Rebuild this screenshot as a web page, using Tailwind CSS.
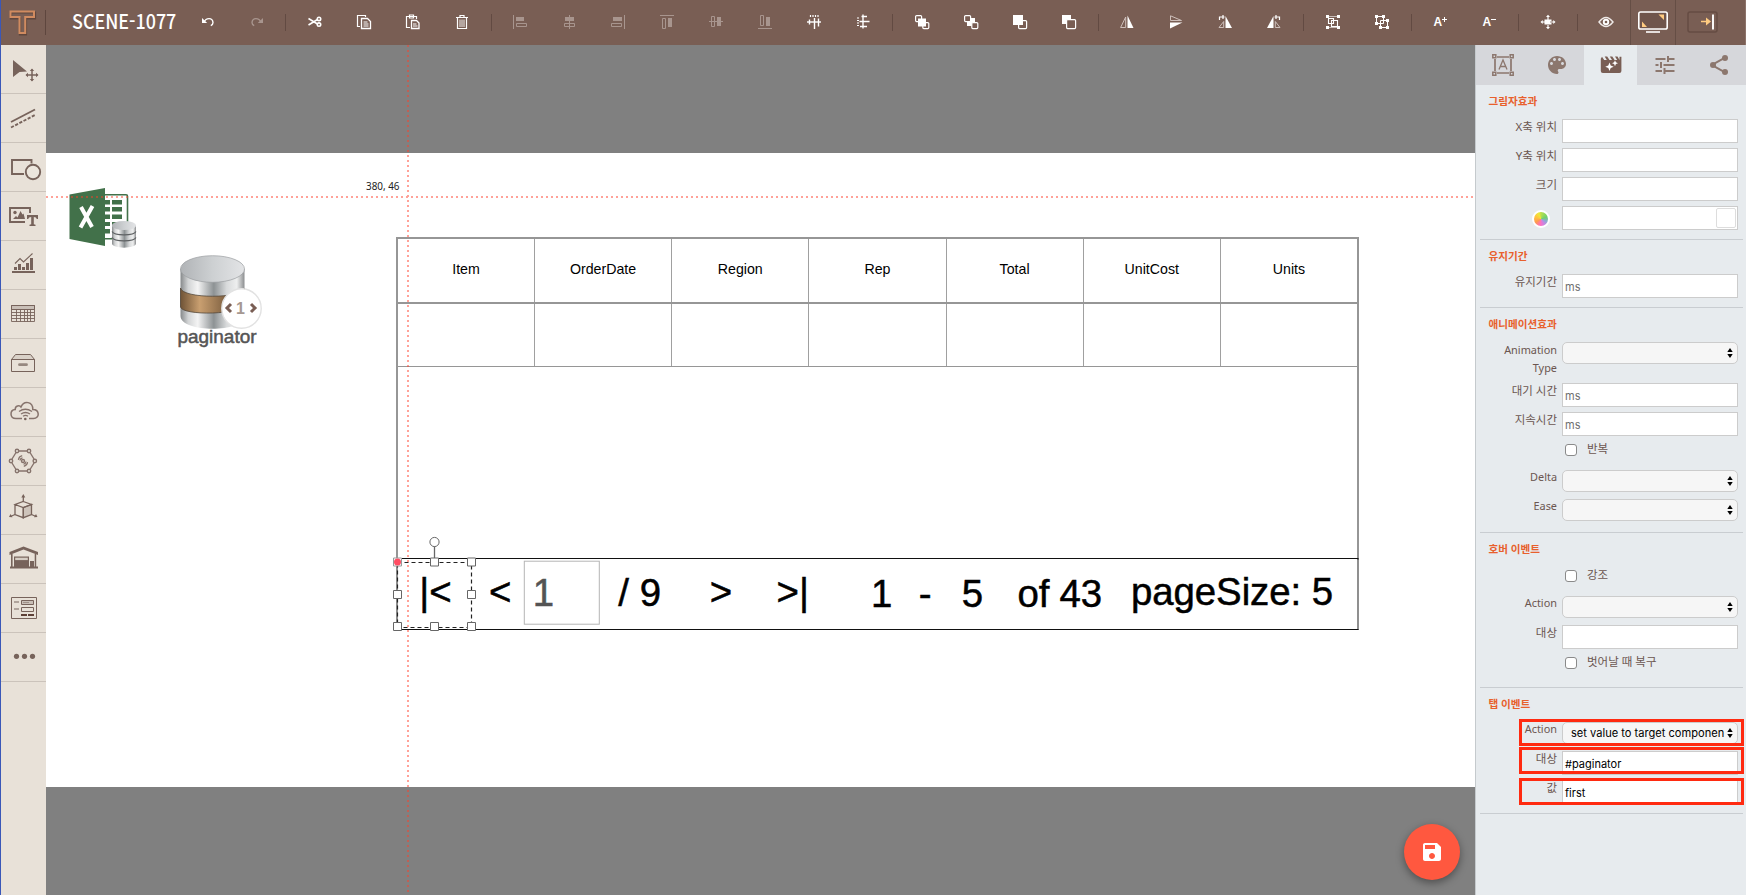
<!DOCTYPE html>
<html lang="ko">
<head>
<meta charset="utf-8">
<title>SCENE-1077</title>
<script src="https://cdn.jsdelivr.net/npm/@tailwindcss/browser@4"></script>
</head>
<body class="flex h-[895px] w-[1746px] flex-col overflow-hidden border-l border-[#3a57b8] bg-[#808080] font-['Noto_Sans','Noto_Sans_CJK_KR',sans-serif]">

<!-- toolbar -->
<header class="flex h-[45px] w-[1745px] shrink-0 items-stretch border-r border-[#8d736a] bg-[#795e54] text-white">
  <div class="flex w-[44px] items-center">
    <svg class="ml-[8px] h-[30px] w-[28px]" viewBox="0 0 28 30" fill="none"><path d="M2 4.500H26V10.500H17V26.500H11V10.500H2Z" stroke="#5f463d" stroke-width="2.200"/><path d="M1.500 3.500H25V9H16.200V25H10.500V9H1.500Z" stroke="#d08b60" stroke-width="2"/></svg>
  </div>
  <div class="my-[10px] w-px bg-[#5e463e]"></div>
  <div class="w-[135px] pl-[26px]"><div class="origin-left scale-x-[0.895] text-[20px] leading-[42px] whitespace-nowrap font-['Noto_Sans_CJK_KR',sans-serif] font-medium">SCENE-1077</div></div>

  <div class="flex items-center px-[2px] pr-[4px] pb-[2px]">
    <div class="flex w-[49px] justify-center"><svg class="size-4" viewBox="0 0 16 16" fill="none" stroke="#fff" stroke-width="1.400"><path d="M4 8.200C6 3.500 12.500 3.300 13 8.500c0 1.600-1 2.600-2.200 3.200"/><path d="M2 4v5h5.200z" fill="#fff" stroke="none"/></svg></div>
    <div class="flex w-[49px] justify-center"><svg class="size-4" viewBox="0 0 16 16" fill="none" stroke="#a8958e" stroke-width="1.400"><path d="M12 8.200C10 3.500 3.500 3.300 3 8.500c0 1.600 1 2.600 2.200 3.200"/><path d="M14 4v5H8.800z" fill="#a8958e" stroke="none"/></svg></div>
  </div>
  <div class="my-[14px] w-px bg-[#624a42]"></div>

  <div class="flex items-center px-[4.250px] pb-[2px]">
    <div class="flex w-[49px] justify-center"><svg class="size-4" viewBox="0 0 16 16" fill="none" stroke="#fff" stroke-width="1.600"><path d="M1.500 4.500l9 5.500M1.500 11l9-5.500"/><circle cx="12" cy="4.900" r="1.700"/><circle cx="12" cy="10.600" r="1.700"/></svg></div>
    <div class="flex w-[49px] justify-center"><svg class="size-4" viewBox="0 0 16 16" fill="none" stroke="#fff"><path d="M4 12.500H1.500V1.500h8V3" stroke-width="1.200"/><path d="M5.500 4.500h6l3 3v7h-9z" stroke-width="1.300"/><path d="M7.500 8h4M7.500 10h5M7.500 12h5"/></svg></div>
    <div class="flex w-[49px] justify-center"><svg class="size-4" viewBox="0 0 16 16" fill="none" stroke="#fff"><path d="M5 13.500H1.500v-11h10V5M4.500 1h4v3h-4z" stroke-width="1.200"/><path d="M6.500 6.500h5l2.500 2.500v5.500H6.500z" stroke-width="1.300"/><path d="M8 10h3.500M8 12h4.500"/></svg></div>
    <div class="flex w-[49px] justify-center"><svg class="size-4" viewBox="0 0 16 16" fill="none" stroke="#fff"><path d="M2 3.500h12M6 3V1.500h4V3M3.500 4v10.500h9V4" stroke-width="1.200"/><path d="M6 5.500v7.500M8 5.500v7.500M10 5.500v7.500" stroke-width=".9"/></svg></div>
  </div>
  <div class="my-[14px] w-px bg-[#624a42]"></div>

  <div class="flex items-center px-[4.250px] pb-[2px]">
    <div class="flex w-[49px] justify-center"><svg class="size-4" viewBox="0 0 16 16" fill="none" stroke="#a8958e"><path d="M1.500 1v14"/><path d="M4 3h8v4H4z" fill="#a8958e" stroke="none"/><path d="M4.500 9.500h10v3h-10z"/></svg></div>
    <div class="flex w-[49px] justify-center"><svg class="size-4" viewBox="0 0 16 16" fill="none" stroke="#a8958e"><path d="M8.500 1v14"/><path d="M4 3h9v4H4z" fill="#a8958e" stroke="none"/><path d="M3.500 9.500h10v3h-10z"/></svg></div>
    <div class="flex w-[49px] justify-center"><svg class="size-4" viewBox="0 0 16 16" fill="none" stroke="#a8958e"><path d="M14.500 1v14"/><path d="M3 3h9v4H3z" fill="#a8958e" stroke="none"/><path d="M1.500 9.500h10v3h-10z"/></svg></div>
    <div class="flex w-[49px] justify-center"><svg class="size-4" viewBox="0 0 16 16" fill="none" stroke="#a8958e"><path d="M1 1.500h14"/><path d="M9 4h4v9H9z" fill="#a8958e" stroke="none"/><path d="M3.500 4.500h3v10h-3z"/></svg></div>
    <div class="flex w-[49px] justify-center"><svg class="size-4" viewBox="0 0 16 16" fill="none" stroke="#a8958e"><path d="M1 7.500h14"/><path d="M9 3h4v9H9z" fill="#a8958e" stroke="none"/><path d="M3.500 2.500h3v10h-3z"/></svg></div>
    <div class="flex w-[49px] justify-center"><svg class="size-4" viewBox="0 0 16 16" fill="none" stroke="#a8958e"><path d="M1 14.500h14"/><path d="M9 3h4v9H9z" fill="#a8958e" stroke="none"/><path d="M3.500 1.500h3v10h-3z"/></svg></div>
    <div class="flex w-[49px] justify-center"><svg class="size-4" viewBox="0 0 16 16" fill="none" stroke="#fff"><path d="M1 8h14" stroke-width="1.400"/><path d="M4.500 1v2M7 1v2M9.500 1v2M12 1v2" stroke-width="1.200"/><path d="M3.500 5.500v5M8.500 4v11M12.500 4.500v8" stroke-width="1.400"/></svg></div>
    <div class="flex w-[49px] justify-center"><svg class="size-4" viewBox="0 0 16 16" fill="none" stroke="#fff"><path d="M8 .5v14" stroke-width="1.400"/><path d="M2 4h2M2 6.500h2M2 9h2M2 11.500h2" stroke-width="1.200"/><path d="M6.500 2.500H12M4.500 7.500h10M5 12.500h7" stroke-width="1.400"/></svg></div>
  </div>
  <div class="my-[14px] w-px bg-[#624a42]"></div>

  <div class="flex items-center px-[4.250px] pb-[2px]">
    <div class="flex w-[49px] justify-center"><svg class="size-4" viewBox="0 0 16 16" fill="none" stroke="#fff" stroke-width="1.200"><rect x="1.600" y="1.600" width="6" height="6" rx="1"/><rect x="8.800" y="8.600" width="6" height="6" rx="1"/><path d="M4 4.500h8v8H4z" fill="#fff" stroke="none"/></svg></div>
    <div class="flex w-[49px] justify-center"><svg class="size-4" viewBox="0 0 16 16" stroke="#fff" stroke-width="1.200"><path d="M4 4h8v8H4z" fill="#fff" stroke="none"/><rect x="1.600" y="1.600" width="6" height="6" rx="1" fill="#795e54"/><rect x="8.800" y="8.600" width="6" height="6" rx="1" fill="#795e54"/></svg></div>
    <div class="flex w-[49px] justify-center"><svg class="size-4" viewBox="0 0 16 16" fill="none" stroke="#fff" stroke-width="1.200"><rect x="6.600" y="6.600" width="8" height="8" rx="1"/><path d="M1 1h10v10H1z" fill="#fff" stroke="none"/></svg></div>
    <div class="flex w-[49px] justify-center"><svg class="size-4" viewBox="0 0 16 16" stroke="#fff" stroke-width="1.200"><path d="M1 1h9v9H1z" fill="#fff" stroke="none"/><rect x="5.600" y="5.600" width="9" height="9" rx="1" fill="#795e54"/></svg></div>
  </div>
  <div class="my-[14px] w-px bg-[#624a42]"></div>

  <div class="flex items-center px-[4.250px] pb-[2px]">
    <div class="flex w-[49px] justify-center"><svg class="size-4" viewBox="0 0 16 16" fill="none"><path d="M8.500 1.500L14.500 14H8.500z" fill="#fff"/><path d="M6.700 3v10.500H1.600z" stroke="#cdbfba"/></svg></div>
    <div class="flex w-[49px] justify-center"><svg class="size-4" viewBox="0 0 16 16" fill="none"><path d="M2 14.500L14.500 8.500H2z" fill="#fff"/><path d="M2.500 6.500h11L2.500 1.800z" stroke="#cdbfba"/></svg></div>
    <div class="flex w-[49px] justify-center"><svg class="size-4" viewBox="0 0 16 16" fill="none"><path d="M8.500 2L15 14H8.500z" fill="#fff"/><path d="M6.700 7.500v6H2z" stroke="#cdbfba"/><path d="M2.500 6V3h5M6 1v4" stroke="#fff" stroke-width="1.200"/></svg></div>
    <div class="flex w-[49px] justify-center"><svg class="size-4" viewBox="0 0 16 16" fill="none"><path d="M7.500 2L1 14h6.500z" fill="#fff"/><path d="M9.300 7.500v6H14z" stroke="#cdbfba"/><path d="M13.500 6V3h-5M10 1v4" stroke="#fff" stroke-width="1.200"/></svg></div>
  </div>
  <div class="my-[14px] w-px bg-[#624a42]"></div>

  <div class="flex items-center px-[4.250px] pb-[2px]">
    <div class="flex w-[49px] justify-center"><svg class="size-4" viewBox="0 0 16 16" fill="none" stroke="#fff"><path d="M4 2.500h8M4 13.500h8" stroke-width=".6"/><path d="M3.500 4.500h5v5h-5zM6.500 6.500h6v6h-6z" stroke-width="1.100"/><path d="M1 1h3v3H1zM12 1h3v3h-3zM1 12h3v3H1zM12 12h3v3h-3z" fill="#fff" stroke="none"/></svg></div>
    <div class="flex w-[49px] justify-center"><svg class="size-4" viewBox="0 0 16 16" fill="none" stroke="#fff"><path d="M2.500 2.500h7v7h-7zM6.500 6.500h7v7h-7z" stroke-width="1"/><path d="M1 1h3v3H1zM8 1h3v3H8zM1 8h3v3H1zM12 5h3v3h-3zM5 12h3v3H5zM12 12h3v3h-3z" fill="#fff" stroke="none"/></svg></div>
  </div>
  <div class="my-[14px] w-px bg-[#624a42]"></div>

  <div class="flex items-center px-[4.250px] pb-[2px]">
    <div class="flex w-[49px] items-start justify-center pt-px"><span class="font-['Liberation_Sans',sans-serif] text-[12px] leading-[14px] font-bold">A</span><svg class="mt-[2px] size-[5px]" viewBox="0 0 6 6" stroke="#fff"><path d="M0 3h6M3 0v6" stroke-width="1.200"/></svg></div>
    <div class="flex w-[49px] items-start justify-center pt-px"><span class="font-['Liberation_Sans',sans-serif] text-[12px] leading-[14px] font-bold">A</span><svg class="mt-[2px] size-[5px]" viewBox="0 0 6 6" stroke="#fff"><path d="M0 3h6" stroke-width="1.200"/></svg></div>
  </div>
  <div class="my-[14px] w-px bg-[#624a42]"></div>

  <div class="flex items-center px-[4.250px] pb-[2px]">
    <div class="flex w-[49px] justify-center"><svg class="size-4" viewBox="0 0 16 16" fill="#fff"><path d="M4.500 5.500h7v5h-7zM8 .8l2 2.200H8.600v3H7.400V3H6zM8 15.200l2-2.200H8.600v-3H7.400v3H6zM.5 8l2.200-2v1.400h3v1.200h-3V10zM15.500 8l-2.200-2v1.400h-3v1.200h3V10z"/></svg></div>
  </div>
  <div class="my-[14px] w-px bg-[#624a42]"></div>
  <div class="flex w-[52px] items-center justify-center pb-[2px] pl-[4px]"><svg class="size-4" viewBox="0 0 16 16" fill="none" stroke="#eee9e7"><path d="M1 8q7-9 14 0q-7 9-14 0z" stroke-width="1.400"/><circle cx="8" cy="8" r="3.200" fill="#fff" stroke="none"/><circle cx="8" cy="8" r="1.300" fill="#795e54" stroke="none"/></svg></div>
  <div class="flex w-[46px] items-center justify-center border-x border-[#654e45] pb-px"><svg class="h-[24px] w-[32px]" viewBox="0 0 32 24"><rect x="1.800" y="2" width="28.400" height="17" rx="1.800" fill="#6f554c" stroke="#fff" stroke-width="1.600"/><path d="M5 17v-5.500l5 5.500zM27 4.500v5.500l-5.500-5.500z" fill="#ffcb80"/><path d="M9 22h14" stroke="#fff" stroke-width="1.600"/></svg></div>
  <div class="flex flex-1 items-center pb-px pl-[11px]"><svg class="h-[22px] w-[32px]" viewBox="0 0 32 22"><rect x="1" y="1" width="29" height="20" rx="2" fill="none" stroke="#654c43" stroke-width="1.500"/><path d="M14 10.500h7" stroke="#ffcb80" stroke-width="1.500"/><path d="M19 6.500l5 4-5 4z" fill="#ffcb80"/><path d="M26 3.500v15" stroke="#fff" stroke-width="1.900"/></svg></div>
</header>

<div class="flex h-[850px] w-[1745px]">

  <!-- component palette -->
  <nav class="w-[45px] shrink-0 bg-[#e8e1d8]">
    <div class="h-[49px] border-b border-[#cbc3bb]"><svg class="h-[48px] w-[45px]" viewBox="0 0 45 48"><path d="M12 15l14 11.500-7.500.5L12 32z" fill="#77635b"/><path d="M25.500 30h11M31 24.500v11" stroke="#77635b" stroke-width="1.500"/><path d="M31 23.500l2.200 2.500h-4.400zM31 36.500l2.200-2.500h-4.400zM24.500 30l2.500-2.200v4.400zM37.500 30l-2.500-2.200v4.400z" fill="#77635b"/></svg></div>
    <div class="h-[49px] border-b border-[#cbc3bb]"><svg class="h-[48px] w-[45px]" viewBox="0 0 45 48" fill="none" stroke="#77635b" stroke-width="1.900"><path d="M10 28l24-12.500"/><path d="M10 33.500l24-12.500" stroke-dasharray="3.200 1.500"/></svg></div>
    <div class="h-[49px] border-b border-[#cbc3bb]"><svg class="h-[48px] w-[45px]" viewBox="0 0 45 48" fill="none" stroke="#77635b" stroke-width="1.900"><path d="M23 31H11V17h19.500v3.500"/><circle cx="32" cy="29" r="7.200" fill="#ece6dd"/></svg></div>
    <div class="h-[49px] border-b border-[#cbc3bb]"><svg class="h-[48px] w-[45px]" viewBox="0 0 45 48" fill="none"><path d="M24 30H9V16h20v5" stroke="#77635b" stroke-width="1.900"/><circle cx="14" cy="20.500" r="1.700" fill="#77635b"/><path d="M12 27l3-3 1.500 1.500L19.500 19l2 3.500 1-1 1.500 5.500z" fill="#77635b"/><path d="M26 23h11v4h-1.200q-.3-2-3-2v7.300l1.700.4V34h-6v-1.300l1.700-.4V25q-2.700 0-3 2H26z" fill="#77635b"/></svg></div>
    <div class="h-[49px] border-b border-[#cbc3bb]"><svg class="h-[48px] w-[45px]" viewBox="0 0 45 48" fill="#77635b"><path d="M11 30h23v2H11zM13 26h3v3h-3zM17 23h3v6h-3zM21 26h3v3h-3zM25 22h3v7h-3zM29 17h3v12h-3z"/><path d="M14 22.500l5-5 3.500 3.500 9-8.500" fill="none" stroke="#77635b" stroke-width="1.100"/></svg></div>
    <div class="h-[49px] border-b border-[#cbc3bb]"><svg class="h-[48px] w-[45px]" viewBox="0 0 45 48" fill="none" stroke="#77635b"><path d="M10.500 15.500h23v4h-23z" fill="#c9bfb7"/><path d="M10.500 15.500h23v16h-23zM10.500 22.500h23M10.500 25.500h23M10.500 28.500h23M15.500 19.500v12M19.500 19.500v12M23.500 19.500v12M26.500 19.500v12M29.500 19.500v12" stroke-width=".9"/></svg></div>
    <div class="h-[49px] border-b border-[#cbc3bb]"><svg class="h-[48px] w-[45px]" viewBox="0 0 45 48" fill="none" stroke="#77635b"><path d="M10.500 20.500l4-5h15l4 5z" fill="#d9d1c8"/><path d="M10.500 20.500h23v12h-23z"/><path d="M18.500 25.700h7" stroke="#968880" stroke-width="2.800" stroke-linecap="round"/></svg></div>
    <div class="h-[49px] border-b border-[#cbc3bb]"><svg class="h-[48px] w-[45px]" viewBox="0 0 45 48" fill="none" stroke="#86736c" stroke-width="1.500"><path d="M21 30.500h-6c-6.500 0-6.500-8.500-.8-9-.2-4 4.500-4.500 5.800-2.500 3-7 12-5.500 11.800 2.500 7 0 7.200 9 .7 9H28"/><path d="M18 23.500q6.300-4.500 13 0M20 26q4.400-3 9 0M22 28.200q2.500-1.600 5 0" stroke-width="1.300"/><circle cx="24.300" cy="31" r="1.300" fill="#77635b" stroke="none"/></svg></div>
    <div class="h-[49px] border-b border-[#cbc3bb]"><svg class="h-[48px] w-[45px]" viewBox="0 0 45 48" fill="none" stroke="#86736c" stroke-width="1.400"><path d="M18 14h8M18 34h8M11 22l4-6.500M11 26l4 6.500M33 22l-4-6.500M33 26l-4 6.500"/><g fill="#e8e1d8"><circle cx="16" cy="14" r="1.700"/><circle cx="28" cy="14" r="1.700"/><circle cx="10" cy="24" r="1.700"/><circle cx="33.800" cy="24" r="1.700"/><circle cx="16" cy="34" r="1.700"/><circle cx="28" cy="34" r="1.700"/></g><circle cx="22" cy="24" r="1.500"/><path d="M19 23.500a3 3 0 0 1 2.500-2.700M17.400 22.800a5 5 0 0 1 3.800-4.200M25 24.500a3 3 0 0 1-2.500 2.700M26.600 25.200a5 5 0 0 1-3.800 4.200" stroke-width="1.200"/></svg></div>
    <div class="h-[49px] border-b border-[#cbc3bb]"><svg class="h-[48px] w-[45px]" viewBox="0 0 45 48" fill="none" stroke="#77635b" stroke-width="1.300"><path d="M22.300 21.500l8.200-3v10l-8.200 3.200z" fill="#cdc3ba"/><path d="M22.300 15.500l8.200 3-8.200 3-8.200-3zM14 18.500v10l8.300 3.200V21.500"/><path d="M22.300 15.500V10M14 28.500l-4.500 2M30.500 28.500l4.500 2"/><path d="M22.300 8l2 3.500h-4zM8 31l1.500-3 2 3.200zM36.500 31l-1.500-3-2 3.200z" fill="#77635b" stroke="none"/></svg></div>
    <div class="h-[49px] border-b border-[#cbc3bb]"><svg class="h-[48px] w-[45px]" viewBox="0 0 45 48" fill="#77635b"><path d="M8.500 17l14-5.500L37 17v3l-14.500-5.500-14 5.500z"/><path d="M10 19h1.600v13H10zM33.700 19h1.500v13h-1.500zM9 31.500h28v2H9zM29 26h4v5.500h-4z"/><path d="M13 21.500h15V32H13z"/><path d="M14.200 22.700h12.600v2.400H14.200z" fill="#d6cdc4"/></svg></div>
    <div class="h-[49px] border-b border-[#cbc3bb]"><svg class="h-[48px] w-[45px]" viewBox="0 0 45 48" fill="none" stroke="#77635b"><path d="M10.500 13.500h25v21h-25z"/><path d="M20.500 16.500h12v4h-12z" fill="#c9bfb7"/><path d="M20.500 23.500h12v4h-12z"/><path d="M13 18h5M13 25h5" stroke="#b0a49c" stroke-width="1.800"/><path d="M22.500 18.500h5" stroke-width="1.200" stroke-dasharray="1 1"/><path d="M20 31h6M27 31h6" stroke="#5d4037" stroke-width="1.800"/></svg></div>
    <div class="h-[49px] border-b border-[#cbc3bb]"><svg class="h-[48px] w-[45px]" viewBox="0 0 45 48" fill="#77635b"><circle cx="15.500" cy="23.300" r="2.600"/><circle cx="23.500" cy="23.300" r="2.600"/><circle cx="31.500" cy="23.300" r="2.600"/></svg></div>
  </nav>

  <!-- stage: a free canvas, objects keep their own coordinates -->
  <main class="relative w-[1429px] shrink-0 overflow-hidden bg-[#808080]">
    <div class="absolute top-[108px] left-0 h-[634px] w-full bg-white"></div>

    <!-- data table component -->
    <div class="absolute top-[191.500px] left-[350px] flex h-[323px] w-[963px] flex-col border-2 border-b-0 border-[#969696] font-['Liberation_Sans',sans-serif] text-[14.200px] text-black">
      <div class="grid h-[65px] grid-cols-[136px_repeat(6,1fr)] border-b-2 border-[#969696] text-center leading-[61px]">
        <div>Item</div>
        <div class="border-l border-[#a0a0a0]">OrderDate</div>
        <div class="border-l border-[#a0a0a0]">Region</div>
        <div class="border-l border-[#a0a0a0]">Rep</div>
        <div class="border-l border-[#a0a0a0]">Total</div>
        <div class="border-l border-[#a0a0a0]">UnitCost</div>
        <div class="border-l border-[#a0a0a0]">Units</div>
      </div>
      <div class="grid h-[63px] grid-cols-[136px_repeat(6,1fr)] border-b border-[#969696]">
        <div></div>
        <div class="border-l border-[#a0a0a0]"></div>
        <div class="border-l border-[#a0a0a0]"></div>
        <div class="border-l border-[#a0a0a0]"></div>
        <div class="border-l border-[#a0a0a0]"></div>
        <div class="border-l border-[#a0a0a0]"></div>
        <div class="border-l border-[#a0a0a0]"></div>
      </div>
    </div>

    <svg class="absolute inset-0 h-[850px] w-[1429px]" viewBox="46 45 1429 850" fill="none">
      <defs>
        <linearGradient id="steel"><stop offset="0" stop-color="#86898b"/><stop offset=".12" stop-color="#d2d4d5"/><stop offset=".27" stop-color="#f4f4f4"/><stop offset=".52" stop-color="#8d9294"/><stop offset=".72" stop-color="#d8dadb"/><stop offset=".88" stop-color="#eeefef"/><stop offset="1" stop-color="#8b8d8f"/></linearGradient>
        <linearGradient id="lid"><stop offset="0" stop-color="#b0b3b6"/><stop offset=".5" stop-color="#cdd0d2"/><stop offset="1" stop-color="#e3e4e6"/></linearGradient>
        <linearGradient id="brass"><stop offset="0" stop-color="#6f5336"/><stop offset=".3" stop-color="#c99f70"/><stop offset=".65" stop-color="#8a6a48"/><stop offset="1" stop-color="#5a432b"/></linearGradient>
      </defs>

      <!-- spreadsheet source -->
      <rect x="100" y="194.700" width="27.500" height="44" rx="1.500" fill="#fff" stroke="#42714a" stroke-width="1.600"/>
      <path d="M104 200h6v4.500h-6zM112 200h10v4.500h-10zM104 207h6v4.500h-6zM112 207h10v4.500h-10zM104 214.500h6v4.500h-6zM112 214.500h10v4.500h-10zM104 222h6v4h-6zM112 222h10v4h-10zM104 229h6v4.500h-6z" fill="#42714a"/>
      <path d="M69.500 194.500L105 188v58l-35.500-7z" fill="#42714a"/>
      <path d="M81 207l11 20M92.500 206l-12 21.500" stroke="#fff" stroke-width="4"/>
      <path d="M112 225v18.500c0 5.500 24 5.500 24 0V225z" fill="url(#steel)"/>
      <path d="M112 231.500c2 4.500 22 4.500 24 0M112 237.500c2 4.500 22 4.500 24 0" stroke="#5e6163" stroke-width="1.100"/>
      <ellipse cx="124" cy="225.500" rx="12" ry="4.500" fill="url(#lid)"/>

      <!-- paginator source -->
      <path d="M180.500 269v47c0 17 64 17 64 0v-47z" fill="url(#steel)"/>
      <path d="M180.500 288c2 11 62 11 64 0v16c-2 11-62 12-64 3z" fill="url(#brass)" stroke="#54473a" stroke-width=".8"/>
      <ellipse cx="212.500" cy="269" rx="32" ry="13.300" fill="url(#lid)" stroke="#9b9ea0" stroke-width=".7"/>
      <circle cx="241.500" cy="308.500" r="19.700" fill="#fff" stroke="#e2e2e2" stroke-width="1.400"/>
      <path d="M231 304l-4 4 4 4M251 304l4 4-4 4" stroke="#795e54" stroke-width="3"/>
      <text x="236" y="314" font-family="Liberation Sans, sans-serif" font-weight="700" font-size="16" fill="#a69892">1</text>
      <text x="177.500" y="343" font-family="Liberation Sans, sans-serif" font-size="18" fill="#555" stroke="#555" stroke-width=".5" textLength="79" lengthAdjust="spacingAndGlyphs">paginator</text>

      <!-- pager bar -->
      <path d="M397 630V558.700M1358 558.700V630" stroke="#555" stroke-width="1.300"/>
      <path d="M397 558.500h961.500M397 629.500h961.500" stroke="#111" stroke-width="1"/>
      <rect x="524.300" y="561.200" width="75" height="63" fill="#fff" stroke="#b5b5b5"/>
      <g font-family="Liberation Sans, sans-serif" font-size="38.400" fill="#000" stroke="#000" stroke-width=".5">
        <text x="419.300" y="605">|&lt;</text>
        <text x="489" y="605">&lt;</text>
        <text x="532.700" y="605.500" fill="#545454" stroke="#545454">1</text>
        <text x="618.300" y="605.500">/ 9</text>
        <text x="709.800" y="605">&gt;</text>
        <text x="776.500" y="605">&gt;|</text>
        <text x="871" y="607">1</text>
        <text x="918.700" y="607">-</text>
        <text x="961.700" y="607">5</text>
        <text x="1017.500" y="607" textLength="84.500">of 43</text>
        <text x="1131" y="605" textLength="202">pageSize: 5</text>
      </g>

      <!-- guides -->
      <path d="M46 197h1429M408 45v850" stroke="#ff3c28" stroke-opacity=".48" stroke-width="2" stroke-dasharray="2 3"/>
      <text x="366" y="190" font-family="Noto Sans, sans-serif" font-size="11" fill="#222" textLength="33.500" lengthAdjust="spacingAndGlyphs">380, 46</text>

      <!-- selection -->
      <path d="M397.500 562.500h74v65h-74z" stroke="#222" stroke-width="1.200" stroke-dasharray="4 3"/>
      <path d="M434.500 546v12" stroke="#666" stroke-width="1.300"/>
      <g fill="#fff" stroke="#666" stroke-width="1">
        <circle cx="434.500" cy="542" r="4.600"/>
        <path d="M430.500 558h8v8h-8zM467.500 558h8v8h-8zM393.500 590.500h8v8h-8zM467.500 590.500h8v8h-8zM393.500 622.500h8v8h-8zM430.500 622.500h8v8h-8zM467.500 622.500h8v8h-8z"/>
        <path d="M393.500 558h8v8h-8z" stroke="#999"/>
      </g>
      <circle cx="397.500" cy="562" r="3.500" fill="#ff4c62"/>
    </svg>

    <button class="absolute top-[779px] left-[1358px] flex size-[56px] items-center justify-center rounded-full bg-[#ff583f] shadow-[0_3px_8px_rgba(0,0,0,0.4)]">
      <svg class="size-6" viewBox="0 0 24 24" fill="#fff"><path d="M17 3H5c-1.110 0-2 .9-2 2v14c0 1.100.89 2 2 2h14c1.100 0 2-.9 2-2V7l-4-4zm-5 16c-1.660 0-3-1.340-3-3s1.340-3 3-3 3 1.340 3 3-1.340 3-3 3zm3-10H5V5h10v4z"/></svg>
    </button>
  </main>

  <!-- property panel -->
  <aside class="relative flex w-[271px] flex-col overflow-hidden border-l border-[#c5cacd] bg-[#e7ebee]">
    <div class="flex h-[40px] shrink-0 bg-[#d6d7db]">
      <div class="flex w-[54px] items-center justify-center"><svg class="h-[22px] w-[22px]" viewBox="0 0 22 22" fill="none" stroke="#8c776e" stroke-width="1.500"><path d="M3 5v12M19 5v12M5 3h12M5 19h12" stroke-width="1.700"/><path d="M.8.8h3v3h-3zM18.200.8h3v3h-3zM.8 18.200h3v3h-3zM18.200 18.200h3v3h-3z"/><path d="M7 15.500l4-9.500 4 9.500M8.500 12.500h5" stroke-width="1.300"/></svg></div>
      <div class="flex w-[54px] items-center justify-center"><svg class="size-6" viewBox="0 0 24 24" fill="#8c776e"><path d="M12 3c-4.970 0-9 4.030-9 9s4.030 9 9 9c.83 0 1.500-.67 1.500-1.500 0-.39-.15-.74-.39-1.010-.23-.26-.38-.61-.38-.99 0-.83.67-1.500 1.500-1.500H16c2.760 0 5-2.240 5-5 0-4.420-4.030-8-9-8zm-5.500 9c-.83 0-1.500-.67-1.500-1.500S5.670 9 6.500 9 8 9.670 8 10.500 7.330 12 6.500 12zm3-4C8.670 8 8 7.330 8 6.500S8.670 5 9.500 5s1.500.67 1.500 1.500S10.330 8 9.500 8zm5 0c-.83 0-1.500-.67-1.500-1.500S13.670 5 14.500 5s1.500.67 1.500 1.500S15.330 8 14.500 8zm3 4c-.83 0-1.500-.67-1.500-1.500S16.670 9 17.500 9s1.500.67 1.500 1.500-.67 1.500-1.500 1.500z"/></svg></div>
      <div class="flex w-[53px] items-center justify-center bg-[#e7ebee]"><svg class="h-[18px] w-[22px]" viewBox="0 0 22 18"><path d="M2 .8L4.200 4h2.600L4.700.5h2.500L9.500 4H12L9.800.5h2.500L14.600 4h2.600L15 .5h2.500L19.500 4V.8h1.900V15q0 2-2 2H2.800q-2 0-2-2V2.800z" fill="#795e54"/><path d="M9.500 6.500l1.200 3 3 1.200-3 1.200-1.200 3-1.200-3-3-1.200 3-1.200zM15 4.200l.9 2.100 2.100.9-2.100.9-.9 2.100-.9-2.100-2.100-.9 2.100-.9z" fill="#fff"/></svg></div>
      <div class="flex w-[55px] items-center justify-center"><svg class="h-[20px] w-[20px]" viewBox="0 0 20 20" fill="#8c776e"><path d="M.5 3h10v2H.5zM12 1h2v6h-2zM14 3h5.500v2H14zM.5 9h3v2h-3zM5 7h2v6H5zM8.500 9h11v2h-11zM.5 15H7v2H.5zM8.500 13h2v6h-2zM10.500 15h9v2h-9z"/></svg></div>
      <div class="flex w-[54px] items-center justify-center"><svg class="size-6" viewBox="0 0 24 24" fill="#8c776e"><path d="M5.500 11.700L18 4.700M5.500 12.300L18 19.300" stroke="#8c776e" stroke-width="1.900"/><circle cx="18" cy="5" r="3"/><circle cx="6" cy="12" r="3"/><circle cx="18" cy="19" r="3"/></svg></div>
    </div>

    <section class="mx-[4px] mr-[3px] border-b border-[#c9cdd1] pb-[4px]">
      <h3 class="h-[34px] pl-[8.500px] text-[10.600px] leading-[32px] font-bold text-[#e8602c]">그림자효과</h3>
      <div class="flex h-[29px]"><label class="w-[77px] pt-px text-right text-[11.500px] leading-[13px] text-[#6b5650]">X축 위치</label><div class="ml-[5px] h-[24px] w-[176px] border border-[#ccc] bg-white"></div></div>
      <div class="flex h-[29px]"><label class="w-[77px] pt-px text-right text-[11.500px] leading-[13px] text-[#6b5650]">Y축 위치</label><div class="ml-[5px] h-[24px] w-[176px] border border-[#ccc] bg-white"></div></div>
      <div class="flex h-[29px]"><label class="w-[77px] pt-px text-right text-[11.500px] leading-[13px] text-[#6b5650]">크기</label><div class="ml-[5px] h-[24px] w-[176px] border border-[#ccc] bg-white"></div></div>
      <div class="flex h-[29px]"><div class="flex w-[77px] justify-end pt-[4px] pr-[7px]"><div class="size-[18px] rounded-full border-2 border-white bg-[conic-gradient(#b8e04a,#6fd070_20%,#8fa8d8_32%,#d080e0_42%,#ff70c0_52%,#ff9a50_66%,#ffc83d_82%,#eee83a_94%,#b8e04a)]"></div></div><div class="ml-[5px] flex h-[24px] w-[176px] justify-end border border-[#ccc] bg-white p-px"><div class="size-[20px] rounded-[2px] border border-[#ddd]"></div></div></div>
    </section>

    <section class="mx-[4px] mr-[3px] border-b border-[#c9cdd1] pb-[4px]">
      <h3 class="h-[34px] pl-[8.500px] text-[10.600px] leading-[32px] font-bold text-[#e8602c]">유지기간</h3>
      <div class="flex h-[29px]"><label class="w-[77px] pt-px text-right text-[11.500px] leading-[13px] text-[#6b5650]">유지기간</label><div class="ml-[5px] h-[24px] w-[176px] border border-[#ccc] bg-white pl-[2px] font-['Inter',sans-serif] text-[11px] leading-[25px] text-[#707070]">ms</div></div>
    </section>

    <section class="mx-[4px] mr-[3px] border-b border-[#c9cdd1] pb-[4px]">
      <h3 class="h-[34px] pl-[8.500px] text-[10.600px] leading-[32px] font-bold text-[#e8602c]">애니메이션효과</h3>
      <div class="flex h-[41px]"><label class="-mt-[1.500px] w-[77px] text-right text-[10.900px] leading-[18px] text-[#6b5650]">Animation<br>Type</label><div class="ml-[5px] flex h-[22px] w-[176px] items-center justify-end rounded-[5px] border border-[#ccc] bg-[#f6f6f6] pr-[4px]"><svg class="h-[10px] w-[6px]" viewBox="0 0 6 10"><path d="M3 0l2.700 4H.3zM3 10l2.700-4H.3z"/></svg></div></div>
      <div class="flex h-[29px]"><label class="w-[77px] pt-px text-right text-[11.500px] leading-[13px] text-[#6b5650]">대기 시간</label><div class="ml-[5px] h-[24px] w-[176px] border border-[#ccc] bg-white pl-[2px] font-['Inter',sans-serif] text-[11px] leading-[25px] text-[#707070]">ms</div></div>
      <div class="flex h-[29px]"><label class="w-[77px] pt-px text-right text-[11.500px] leading-[13px] text-[#6b5650]">지속시간</label><div class="ml-[5px] h-[24px] w-[176px] border border-[#ccc] bg-white pl-[2px] font-['Inter',sans-serif] text-[11px] leading-[25px] text-[#707070]">ms</div></div>
      <div class="flex h-[29px] pl-[85px]"><span class="mt-[3px] size-[12px] rounded-[3px] border border-[#8a8a8a] bg-white"></span><span class="ml-[10px] pt-px text-[11.500px] leading-[13px] text-[#6b5650]">반복</span></div>
      <div class="flex h-[29px]"><label class="w-[77px] text-right text-[10.900px] leading-[14px] text-[#6b5650]">Delta</label><div class="ml-[5px] flex h-[22px] w-[176px] items-center justify-end rounded-[5px] border border-[#ccc] bg-[#f6f6f6] pr-[4px]"><svg class="h-[10px] w-[6px]" viewBox="0 0 6 10"><path d="M3 0l2.700 4H.3zM3 10l2.700-4H.3z"/></svg></div></div>
      <div class="flex h-[29px]"><label class="w-[77px] text-right text-[10.900px] leading-[14px] text-[#6b5650]">Ease</label><div class="ml-[5px] flex h-[22px] w-[176px] items-center justify-end rounded-[5px] border border-[#ccc] bg-[#f6f6f6] pr-[4px]"><svg class="h-[10px] w-[6px]" viewBox="0 0 6 10"><path d="M3 0l2.700 4H.3zM3 10l2.700-4H.3z"/></svg></div></div>
    </section>

    <section class="mx-[4px] mr-[3px] border-b border-[#c9cdd1] pb-[4px]">
      <h3 class="h-[34px] pl-[8.500px] text-[10.600px] leading-[32px] font-bold text-[#e8602c]">호버 이벤트</h3>
      <div class="flex h-[29px] pl-[85px]"><span class="mt-[3px] size-[12px] rounded-[3px] border border-[#8a8a8a] bg-white"></span><span class="ml-[10px] pt-px text-[11.500px] leading-[13px] text-[#6b5650]">강조</span></div>
      <div class="flex h-[29px]"><label class="w-[77px] text-right text-[10.900px] leading-[14px] text-[#6b5650]">Action</label><div class="ml-[5px] flex h-[22px] w-[176px] items-center justify-end rounded-[5px] border border-[#ccc] bg-[#f6f6f6] pr-[4px]"><svg class="h-[10px] w-[6px]" viewBox="0 0 6 10"><path d="M3 0l2.700 4H.3zM3 10l2.700-4H.3z"/></svg></div></div>
      <div class="flex h-[29px]"><label class="w-[77px] pt-px text-right text-[11.500px] leading-[13px] text-[#6b5650]">대상</label><div class="ml-[5px] h-[24px] w-[176px] border border-[#ccc] bg-white"></div></div>
      <div class="flex h-[29px] pl-[85px]"><span class="mt-[3px] size-[12px] rounded-[3px] border border-[#8a8a8a] bg-white"></span><span class="ml-[10px] pt-px text-[11.500px] leading-[13px] text-[#6b5650]">벗어날 때 복구</span></div>
    </section>

    <section class="mx-[4px] mr-[3px] border-b border-[#c9cdd1] pb-[4px]">
      <h3 class="h-[34px] pl-[8.500px] text-[10.600px] leading-[32px] font-bold text-[#e8602c]">탭 이벤트</h3>
      <div class="flex h-[29px]"><label class="w-[77px] text-right text-[10.900px] leading-[14px] text-[#6b5650]">Action</label><div class="ml-[5px] flex h-[22px] w-[176px] items-center justify-between rounded-[5px] border border-[#ccc] bg-[#f6f6f6] pr-[4px] pl-[8px]"><span class="font-['Inter',sans-serif] text-[11.100px] whitespace-nowrap text-black">set value to target componen</span><svg class="h-[10px] w-[6px]" viewBox="0 0 6 10"><path d="M3 0l2.700 4H.3zM3 10l2.700-4H.3z"/></svg></div></div>
      <div class="flex h-[29px]"><label class="w-[77px] pt-px text-right text-[11.500px] leading-[13px] text-[#6b5650]">대상</label><div class="ml-[5px] h-[24px] w-[176px] border border-[#ccc] bg-white pl-[2px] font-['Inter',sans-serif] text-[11px] leading-[25px] text-black">#paginator</div></div>
      <div class="flex h-[29px]"><label class="w-[77px] pt-px text-right text-[11.500px] leading-[13px] text-[#6b5650]">값</label><div class="ml-[5px] h-[24px] w-[176px] border border-[#ccc] bg-white pl-[2px] font-['Inter',sans-serif] text-[11px] leading-[25px] text-black">first</div></div>
    </section>

    <!-- highlight frames over the tap event rows -->
    <div class="absolute top-[674px] left-[43px] h-[27px] w-[225px] border-[3px] border-[#ff2a10]"></div>
    <div class="absolute top-[702px] left-[43px] h-[27px] w-[225px] border-[3px] border-[#ff2a10]"></div>
    <div class="absolute top-[733px] left-[43px] h-[27px] w-[225px] border-[3px] border-[#ff2a10]"></div>
  </aside>
</div>
</body>
</html>
